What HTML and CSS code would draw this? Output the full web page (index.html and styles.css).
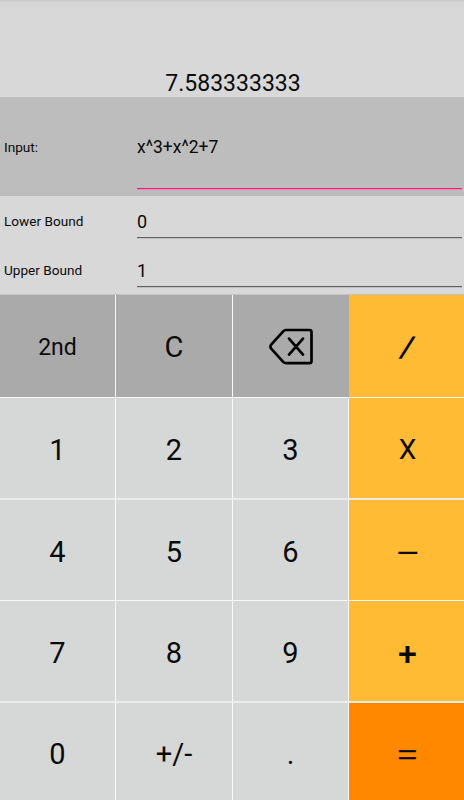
FILE: index.html
```
<!DOCTYPE html>
<html lang="en">
<head>
<meta charset="UTF-8">
<meta name="viewport" content="width=device-width, initial-scale=1.0">
<title>Calculator</title>
<link rel="stylesheet" href="styles.css">
</head>
<body>

<div class="calc">
  <div class="result">7.583333333</div>

  <div class="row input">
    <span class="label">Input:</span>
    <span class="field">x^3+x^2+7</span>
  </div>
  <div class="row bound">
    <span class="label">Lower Bound</span>
    <span class="field">0</span>
  </div>
  <div class="row bound">
    <span class="label">Upper Bound</span>
    <span class="field">1</span>
  </div>

  <div class="keys">
    <div class="key fn second">2nd</div>
    <div class="key fn">C</div>
    <div class="key fn del">
      <svg width="46" height="38" viewBox="0 0 46 38">
        <path d="M17 2H40.5Q42.5 2 42.5 4V33Q42.5 35.2 40.5 35.2H17Q15.5 35.2 14.2 33.9L2.2 20.6Q.6 18.6 2.2 16.6L14.2 3.3Q15.5 2 17 2Z" class="outline"/>
        <path d="M20 10.6L34 26.6M34 10.6L20 26.6" class="cross"/>
      </svg>
    </div>
    <div class="key op first slash"><span>/</span></div>

    <div class="key soft">1</div>
    <div class="key soft">2</div>
    <div class="key soft">3</div>
    <div class="key op soft times">X</div>

    <div class="key">4</div>
    <div class="key">5</div>
    <div class="key">6</div>
    <div class="key op minus">—</div>

    <div class="key soft">7</div>
    <div class="key soft">8</div>
    <div class="key soft">9</div>
    <div class="key op soft plus">+</div>

    <div class="key last">0</div>
    <div class="key last">+/-</div>
    <div class="key last">.</div>
    <div class="key op last equals"><span>=</span></div>
  </div>
</div>

</body>
</html>
```
FILE: styles.css
```
/* reset */
*{box-sizing:border-box;margin:0;padding:0}
html,body{height:100%;overflow:hidden}
body{font-family:Roboto,sans-serif;color:#0a0a0a;background:#d8d8d8}

.calc{display:flex;flex-direction:column;width:464px;height:800px}

/* result */
.result{
  height:97px;padding:70px 0 0 2px;
  font-size:23px;line-height:28px;text-align:center;
  background:linear-gradient(#c8c8c8 0,#d4d4d4 2px,#d8d8d8 8px);
}

/* input rows */
.row{display:flex;padding:0 2px 0 4px}
.label{width:133px;font-size:13.6px}
.field{flex:1;font-size:18px;border-bottom:1px solid #626262;box-shadow:0 1px #c0c0c0}
.input{height:99px;padding-bottom:7px;background:#bdbdbd}
.input .label,.input .field{line-height:101px}
.input .field{height:92px;font-size:17.5px;border-color:#ff1a80;box-shadow:0 1px #dc8ba9}
.bound{height:49px;padding-bottom:7px}
.bound .label,.bound .field{line-height:51px}
.bound .field{height:42px}

/* keypad */
.keys{
  flex:1;display:grid;
  grid-template-columns:116px 117px 116px 115px;
  grid-template-rows:103px 102px 101px 102px 97px;
  padding-top:1px;background:#c2c2c2;
}
.key{
  display:flex;align-items:center;justify-content:center;
  padding-top:4px;font-size:29px;line-height:34px;background:#d6d8d7;
  border:solid #f8f8f8;border-width:0 1px 1px 0;
}
.soft{border-bottom:2px solid #ebebeb}
.last{border-bottom:0}

.fn{padding-top:1px;background:#aaa}
.second{padding-top:3px;font-size:23px}
.del{padding-left:2px;border-right-color:#aaa}
.outline,.cross{fill:none;stroke:#000;stroke-width:2.7;stroke-linecap:round;stroke-linejoin:round}

/* operators */
.op{padding-left:2px;background:#fb3;border-right:0}
.first{padding-top:2px}
.slash{font-weight:700;font-style:italic}
.slash span{transform:skewX(-7deg)}
.times{font-size:28px}
.minus{padding-top:6px}
.plus{padding-top:3px;font-size:34px;font-weight:500}
.equals{padding-top:5px;font-size:34px;font-weight:300;background:#f80}
.equals span{transform:scaleX(1.2);-webkit-text-stroke:.3px #0a0a0a}
```
